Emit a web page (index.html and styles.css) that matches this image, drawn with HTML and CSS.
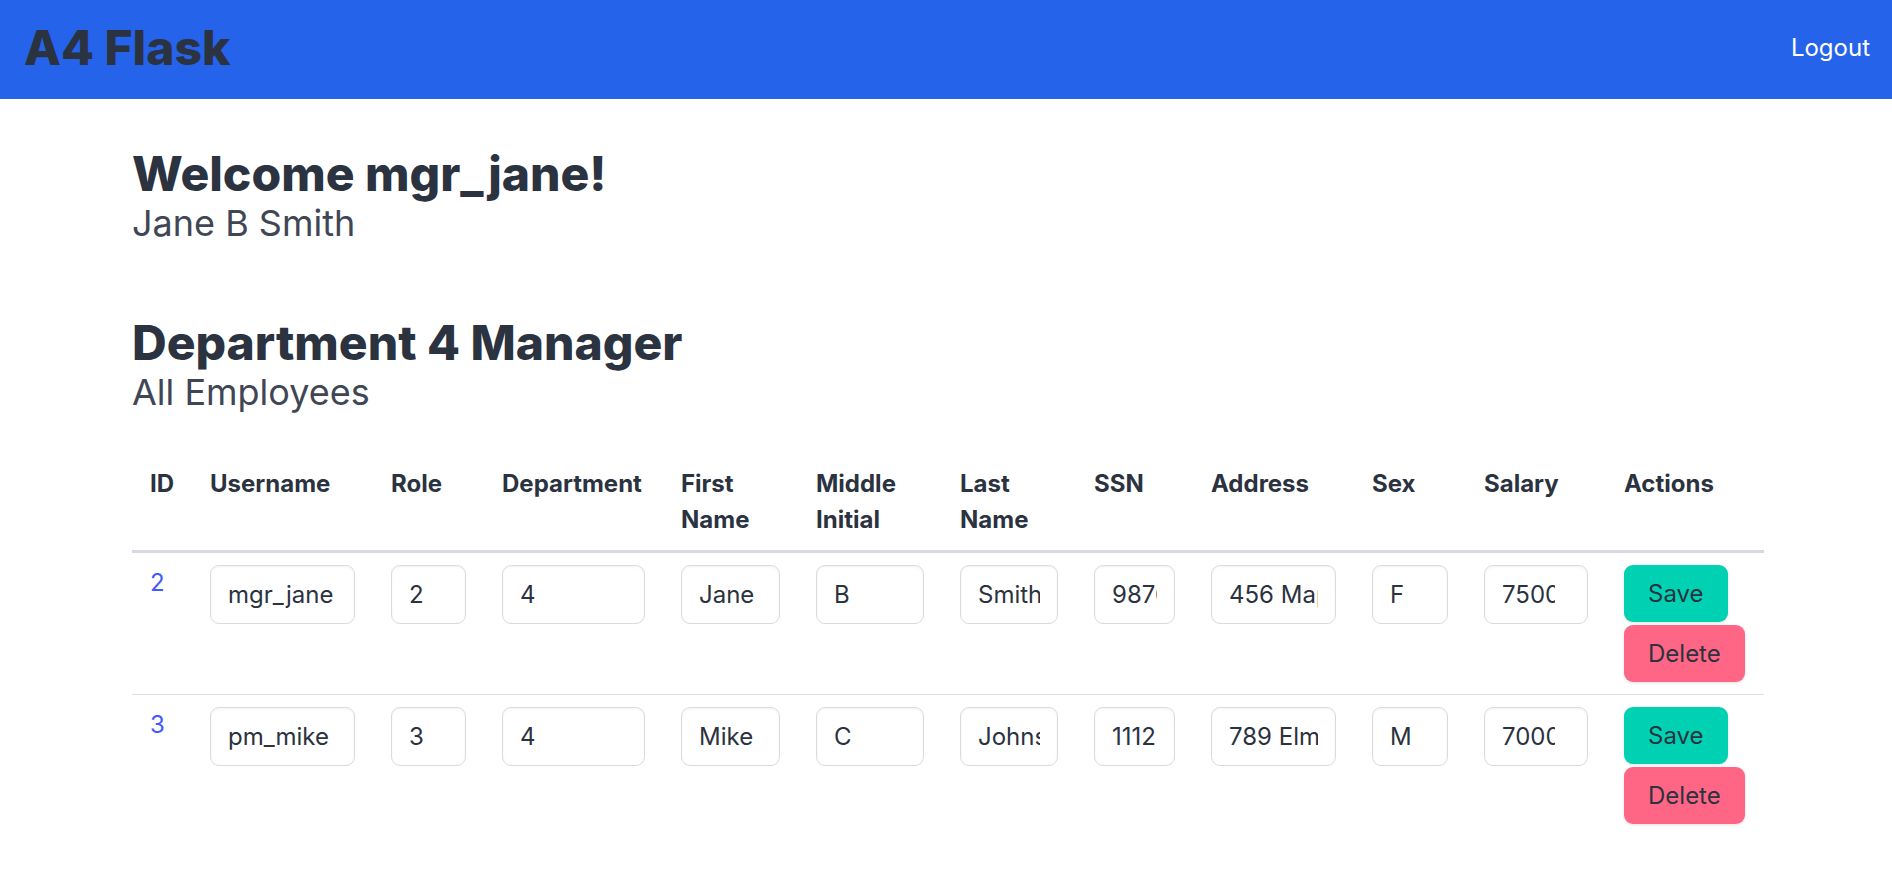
FILE: index.html
```html
<!DOCTYPE html>
<html lang="en">
<head>
<meta charset="utf-8">
<title>A4 Flask</title>
<link rel="stylesheet" href="styles.css">
</head>
<body>
<nav class="navbar">
  <a class="brand" href="#">A4 Flask</a>
  <a class="nav-link" href="#">Logout</a>
</nav>
<main class="page">
  <section class="intro">
    <h1 class="title">Welcome mgr_jane!</h1>
    <p class="subtitle">Jane B Smith</p>
  </section>
  <section class="manager">
    <h2 class="title">Department 4 Manager</h2>
    <p class="subtitle">All Employees</p>
  </section>
  <table class="table">
    <colgroup>
      <col class="c-id"><col class="c-user"><col class="c-role"><col class="c-dept"><col class="c-first"><col class="c-middle"><col class="c-last"><col class="c-ssn"><col class="c-addr"><col class="c-sex"><col class="c-sal"><col class="c-act">
    </colgroup>
    <thead>
      <tr>
        <th>ID</th><th>Username</th><th>Role</th><th>Department</th><th>First Name</th><th>Middle Initial</th><th>Last Name</th><th>SSN</th><th>Address</th><th>Sex</th><th>Salary</th><th>Actions</th>
      </tr>
    </thead>
    <tbody>
      <tr>
        <td><a class="id-link" href="#">2</a></td>
        <td><input class="input" type="text" value="mgr_jane"></td>
        <td><input class="input" type="number" value="2"></td>
        <td><input class="input" type="number" value="4"></td>
        <td><input class="input" type="text" value="Jane"></td>
        <td><input class="input" type="text" value="B"></td>
        <td><input class="input" type="text" value="Smith"></td>
        <td><input class="input" type="text" value="987654321"></td>
        <td><input class="input" type="text" value="456 Maple St"></td>
        <td><input class="input" type="text" value="F"></td>
        <td><input class="input" type="number" value="75000"></td>
        <td><div class="actions"><button class="btn btn-save">Save</button><button class="btn btn-delete">Delete</button></div></td>
      </tr>
      <tr>
        <td><a class="id-link" href="#">3</a></td>
        <td><input class="input" type="text" value="pm_mike"></td>
        <td><input class="input" type="number" value="3"></td>
        <td><input class="input" type="number" value="4"></td>
        <td><input class="input" type="text" value="Mike"></td>
        <td><input class="input" type="text" value="C"></td>
        <td><input class="input" type="text" value="Johnson"></td>
        <td><input class="input" type="text" value="111223333"></td>
        <td><input class="input" type="text" value="789 Elm St"></td>
        <td><input class="input" type="text" value="M"></td>
        <td><input class="input" type="number" value="70000"></td>
        <td><div class="actions"><button class="btn btn-save">Save</button><button class="btn btn-delete">Delete</button></div></td>
      </tr>
    </tbody>
  </table>
</main>
</body>
</html>
```
FILE: styles.css
```css
* { box-sizing: border-box; }
html, body { margin: 0; padding: 0; background: #ffffff; }
body {
  font-family: Inter, "Noto Sans", "Liberation Sans", sans-serif;
  color: #404654;
  font-size: 24px;
  line-height: 1.5;
}
a { text-decoration: none; }

.navbar {
  height: 99px;
  background: #2563eb;
  display: flex;
  align-items: center;
  justify-content: space-between;
  padding: 0 22px 4px 24px;
}
.brand {
  font-size: 48px;
  font-weight: 800;
  line-height: 1.125;
  color: #2b3240;
}
.nav-link {
  font-size: 24px;
  color: #ffffff;
}

.page {
  padding: 48px 128px 40px 132px;
}
.title {
  margin: 0;
  font-size: 48px;
  font-weight: 800;
  line-height: 1.125;
  color: #2b3240;
}
.subtitle {
  margin: 0;
  font-size: 36px;
  font-weight: 400;
  line-height: 1.25;
  color: #404654;
}
.manager { margin-top: 70px; }

.table {
  margin-top: 39px;
  width: 1632px;
  border-collapse: collapse;
  table-layout: fixed;
}
.c-id { width: 60px; }
.c-user { width: 181px; }
.c-role { width: 111px; }
.c-dept { width: 179px; }
.c-first { width: 135px; }
.c-middle { width: 144px; }
.c-last { width: 134px; }
.c-ssn { width: 117px; }
.c-addr { width: 161px; }
.c-sex { width: 112px; }
.c-sal { width: 140px; }
.c-act { width: 158px; }

.table th, .table td {
  padding: 12px 18px;
  text-align: left;
  vertical-align: top;
  font-size: 24px;
  line-height: 36px;
}
.table th {
  font-weight: 700;
  color: #2b3240;
  border-bottom: 3px solid #d6d9e0;
}
.table tbody td { border-bottom: 1px solid #dcdee4; }
.table tbody tr:last-child td { border-bottom: 0; }

.id-link { color: #4258ff; }

.input {
  display: block;
  width: 100%;
  height: 59px;
  padding: 0 17px;
  font-family: Inter, "Noto Sans", "Liberation Sans", sans-serif;
  font-size: 24px;
  color: #2b3240;
  background: #ffffff;
  border: 1px solid #d9dbe3;
  border-radius: 9px;
  box-shadow: inset 0 1px 3px rgba(10, 10, 10, 0.05);
  outline: none;
}

.actions {
  display: flex;
  flex-direction: column;
  align-items: flex-start;
  gap: 3px;
}
.btn {
  height: 57px;
  padding: 0 23px;
  font-family: Inter, "Noto Sans", "Liberation Sans", sans-serif;
  font-size: 24px;
  color: #2b3240;
  border: 1px solid transparent;
  border-radius: 9px;
  cursor: pointer;
  box-shadow: 0 1px 3px rgba(10, 10, 10, 0.12);
}
.btn-save { background: #00d1b2; }
.btn-delete { background: #ff6685; }
```
